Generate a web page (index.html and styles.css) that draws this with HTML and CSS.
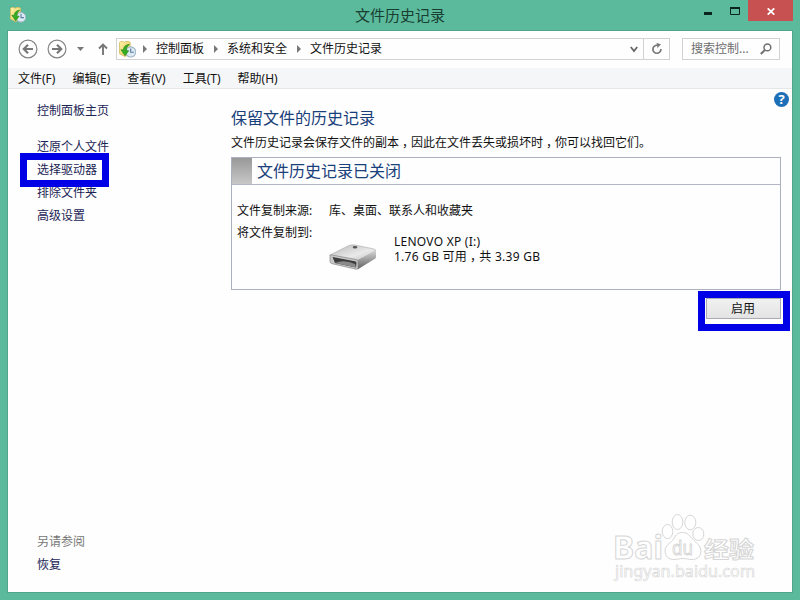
FILE: index.html
```
<!DOCTYPE html>
<html lang="zh-CN">

<head>
    <meta charset="UTF-8">
    <title>文件历史记录</title>
    <link rel="stylesheet" href="styles.css">
</head>

<body>
    <!-- shared file history icon -->
    <svg class="defs" width="0" height="0">
        <defs>
            <linearGradient id="folder" x1="0" y1="0" x2="1" y2="1">
                <stop offset="0" stop-color="#fff3a8"/>
                <stop offset="1" stop-color="#e3c452"/>
            </linearGradient>
            <symbol id="history" viewBox="0 0 16 16">
                <path d="M.5 1.500V12l5 2.500 5-2V1.500L9.500.5H6L5 1.500 4 .5H1.500z" fill="url(#folder)" stroke="#d3bd62" stroke-width=".8"/>
                <circle cx="11" cy="10.300" r="4.800" fill="#dceaf5" stroke="#9eb3c3"/>
                <path d="M11 7v3.600h3" fill="none" stroke="#5d7f9c" stroke-width="1.100"/>
                <path d="M9.800 3.200C6 3.500 4.300 5.500 4.200 8.500L1.800 8.200l3.900 5.600 3.500-4.600-2.300-.2C6.800 6.500 7.600 5 9.800 3.200z" fill="#35ae25" stroke="#228817" stroke-width=".6"/>
            </symbol>
        </defs>
    </svg>

    <div class="titlebar">
        <svg class="app-icon" width="16" height="16"><use href="#history"/></svg>
        <h1>文件历史记录</h1>
        <div class="controls">
            <svg class="min" width="8" height="3"><path d="M0 0h8v3H0z" fill="#0b251c"/></svg>
            <svg class="max" width="10" height="8"><path d="M.5 1h9v6.500h-9z" fill="none" stroke="#0b251c"/><path d="M0 0h10v2H0z" fill="#0b251c"/></svg>
            <div class="close">
                <svg width="8" height="7"><path d="M.7.300l6.600 6.400M7.300.300L.7 6.700" stroke="#fff" stroke-width="1.700"/></svg>
            </div>
        </div>
    </div>

    <div class="window">
        <div class="navbar">
            <svg class="round" width="20" height="20" viewBox="0 0 20 20"><circle cx="10" cy="10" r="8.900" fill="#fff" stroke="#858585" stroke-width="1.200"/><path d="M15 10H6M10 5.800L5.800 10l4.200 4.200" fill="none" stroke="#777" stroke-width="2.200"/></svg>
            <svg class="round" width="20" height="20" viewBox="0 0 20 20"><circle cx="10" cy="10" r="8.900" fill="#fff" stroke="#858585" stroke-width="1.200"/><path d="M5 10h9M10 5.800l4.200 4.200-4.200 4.200" fill="none" stroke="#777" stroke-width="2.200"/></svg>
            <svg class="recent" width="7" height="4"><path d="M0 0h7L3.500 4z" fill="#777"/></svg>
            <svg class="up" width="10" height="12"><path d="M5 12V2M1 5.500l4-4 4 4" fill="none" stroke="#777" stroke-width="1.900"/></svg>
            <div class="address">
                <svg class="path-icon" width="17" height="17"><use href="#history"/></svg>
                <svg class="arrow" width="4" height="8"><path d="M0 0l4 4-4 4z" fill="#777"/></svg>
                <span>控制面板</span>
                <svg class="arrow" width="4" height="8"><path d="M0 0l4 4-4 4z" fill="#777"/></svg>
                <span>系统和安全</span>
                <svg class="arrow" width="4" height="8"><path d="M0 0l4 4-4 4z" fill="#777"/></svg>
                <span>文件历史记录</span>
                <svg class="drop" width="8" height="7"><path d="M.8 1L4 5l3.200-4" fill="none" stroke="#666" stroke-width="1.800"/></svg>
                <div class="refresh">
                    <svg width="12" height="12" viewBox="0 0 12 12"><path d="M6.500 2.300A4 4 0 1 0 9.900 6" fill="none" stroke="#777" stroke-width="1.700"/><path d="M5.500 0l4.500 1.200L6.500 5z" fill="#777"/></svg>
                </div>
            </div>
            <div class="search">
                <span>搜索控制...</span>
                <svg width="12" height="12" viewBox="0 0 12 12"><circle cx="7.400" cy="4.400" r="3.400" fill="none" stroke="#707070" stroke-width="1.500"/><path d="M5 6.800L.8 11" stroke="#707070" stroke-width="2"/></svg>
            </div>
        </div>

        <div class="menubar">
            <span>文件(F)</span>
            <span>编辑(E)</span>
            <span>查看(V)</span>
            <span>工具(T)</span>
            <span>帮助(H)</span>
        </div>

        <div class="content">
            <div class="sidebar">
                <a class="home">控制面板主页</a>
                <a>还原个人文件</a>
                <a class="marked">选择驱动器</a>
                <a>排除文件夹</a>
                <a>高级设置</a>
                <div class="see-also">
                    <p>另请参阅</p>
                    <a>恢复</a>
                </div>
            </div>

            <div class="main">
                <h2>保留文件的历史记录</h2>
                <p class="desc">文件历史记录会保存文件的副本<span class="comma">，</span>因此在文件丢失或损坏时<span class="comma">，</span>你可以找回它们。</p>
                <div class="panel">
                    <div class="panel-head">
                        <div class="status"></div>
                        <h2>文件历史记录已关闭</h2>
                    </div>
                    <div class="panel-body">
                        <div>文件复制来源:</div>
                        <div>库、桌面、联系人和收藏夹</div>
                        <div>将文件复制到:</div>
                        <div class="drive">
                            <svg width="48" height="27" viewBox="0 0 48 27">
                                <defs>
                                    <linearGradient id="top" x1="0" y1="0" x2="1" y2="1">
                                        <stop offset="0" stop-color="#b8b8b8"/>
                                        <stop offset=".6" stop-color="#e9e9e9"/>
                                        <stop offset="1" stop-color="#bcbcbc"/>
                                    </linearGradient>
                                    <linearGradient id="side" x1="0" y1="0" x2="0" y2="1">
                                        <stop offset="0" stop-color="#d5d5d5"/>
                                        <stop offset="1" stop-color="#606060"/>
                                    </linearGradient>
                                </defs>
                                <path d="M1 11L20 1.500q3-1 6-.5l19 4q2 .5 1.500 2L30 16.500 1 12z" fill="url(#top)" stroke="#aaa" stroke-width=".6"/>
                                <path d="M28.500 16L47 6.500v6.500q0 1-1 1.800L28.500 25.500z" fill="url(#side)"/>
                                <path d="M2 10.800l25 4.700q2 .4 2 2v6q0 2-2 1.700L2.500 19.500Q1 19 1 17.500v-5.500q0-1.400 1-1.200z" fill="#c8c8c8" stroke="#858585" stroke-width=".7"/>
                                <path d="M3.500 13l22.500 4.200q1.500.3 1.500 1.800l-.5 4.500L6 19z" fill="#3d3d3d"/>
                                <path d="M6 19q9-4 20 1l1 3.500z" fill="#8a8a8a"/>
                                <ellipse cx="26" cy="3.300" rx="2.300" ry="1.300" fill="#555"/>
                            </svg>
                            <div class="drive-info">
                                <div>LENOVO XP (I:)</div>
                                <div>1.76 GB 可用<span class="comma">，</span>共 3.39 GB</div>
                            </div>
                        </div>
                    </div>
                </div>
                <div class="actions">
                    <button>启用</button>
                </div>
            </div>
        </div>

        <div class="help">?</div>

        <svg class="watermark" width="150" height="75" viewBox="0 0 150 75">
            <g class="mark">
                <text class="bai" x="0" y="49.500" textLength="50" lengthAdjust="spacingAndGlyphs">Bai</text>
                <ellipse cx="54.500" cy="22.500" rx="5.300" ry="7"/>
                <ellipse cx="64.500" cy="13" rx="5.300" ry="7.500"/>
                <ellipse cx="77.300" cy="13.500" rx="5.500" ry="7.300"/>
                <ellipse cx="85.300" cy="25" rx="5.500" ry="6.500"/>
                <path d="M69.500 23.500c-6 0-7 4-10 8-3 3-7 5-7.500 10 0 6 4 9 9 9 4 0 5-1 9-1s5 1 9 1c5 0 9-3 9-9-.5-5-4-7-7-10-4-4-6-8-11.500-8z"/>
                <text class="du" x="59" y="45.500" textLength="21" lengthAdjust="spacingAndGlyphs">du</text>
                <text class="jingyan" x="91" y="48" textLength="50" lengthAdjust="spacingAndGlyphs">经验</text>
                <text class="url" x="2" y="68" textLength="140" lengthAdjust="spacingAndGlyphs">jingyan.baidu.com</text>
            </g>
        </svg>
    </div>
</body>

</html>
```
FILE: styles.css
```
*,
*::after {
    box-sizing: border-box;
}

body {
    margin: 0;
    width: 800px;
    height: 600px;
    overflow: hidden;
    display: flex;
    flex-direction: column;
    background: #5cba9c;
    font-family: "Noto Sans", "Noto Sans CJK SC", sans-serif;
    font-size: 12px;
    line-height: 16px;
    color: #111;
}

h1,
h2,
p {
    margin: 0;
    font-weight: normal;
}

svg {
    display: block;
    flex: none;
}

.defs {
    position: absolute;
}

.titlebar {
    height: 31px;
    flex: none;
    display: grid;
    grid-template-columns: 120px 1fr 120px;
    align-items: start;
}

.app-icon {
    margin: 7px 0 0 10px;
}

.titlebar h1 {
    font-size: 15px;
    line-height: 30px;
    text-align: center;
    color: #173e31;
}

.controls {
    display: flex;
    align-items: flex-start;
    justify-content: flex-end;
    padding-right: 7px;
}

.min {
    margin: 12px 18px 0 0;
}

.max {
    margin: 7px 8px 0 0;
}

.close {
    width: 45px;
    height: 21px;
    display: flex;
    align-items: center;
    justify-content: center;
    padding-top: 2px;
    background: #c75050;
}

.window {
    position: relative;
    flex: 1;
    margin: 0 8px 8px;
    display: flex;
    flex-direction: column;
    background: #fefefe;
    box-shadow: 0 0 0 1px #4fa78b;
}

.navbar {
    height: 37px;
    padding: 7px 12px 0 10px;
    display: flex;
}

.round {
    margin: 1px 9px 0 0;
}

.recent {
    margin: 9px 0 0 1px;
}

.up {
    margin: 5px 8px 0 14px;
}

.address {
    width: 554px;
    height: 22px;
    border: 1px solid #d2d2d2;
    display: flex;
    align-items: center;
}

.path-icon {
    margin: 0 2px;
}

.address .arrow {
    margin: 0 9px 0 10px;
}

.address .path-icon + .arrow {
    margin-left: 5px;
}

.drop {
    margin-left: auto;
    margin-right: 5px;
}

.refresh {
    width: 26px;
    height: 20px;
    display: flex;
    align-items: center;
    justify-content: center;
    border-left: 1px solid #d2d2d2;
}

.search {
    width: 98px;
    height: 22px;
    margin-left: 12px;
    padding: 0 7px 0 8px;
    border: 1px solid #d2d2d2;
    display: flex;
    align-items: center;
    justify-content: space-between;
    color: #6d6d6d;
}

.menubar {
    height: 21px;
    padding-left: 10px;
    display: flex;
    gap: 17px;
    line-height: 21px;
    background: #f5f6f7;
    border-bottom: 1px solid #e4e6e8;
}

.content {
    flex: 1;
    display: flex;
}

.sidebar {
    width: 223px;
    padding: 14px 0 19px 29px;
    display: flex;
    flex-direction: column;
    align-items: flex-start;
    gap: 7px;
    color: #1b2455;
}

.home {
    margin-bottom: 13px;
}

.marked {
    position: relative;
}

/* highlight frame around the link */
.marked::after {
    content: "";
    position: absolute;
    left: -17px;
    top: -9px;
    width: 89px;
    height: 34px;
    border: 7px solid #0000e6;
}

.see-also {
    margin-top: auto;
    display: flex;
    flex-direction: column;
    gap: 7px;
}

.see-also p {
    color: #777;
}

.main {
    width: 550px;
    padding-top: 18px;
}

h2 {
    font-size: 16px;
    line-height: 22px;
    color: #19407b;
}

.desc {
    margin-top: 6px;
}

/* half-width comma centred in a full cell */
.comma {
    padding: 0 3px;
    font-feature-settings: "halt";
}

.panel {
    height: 133px;
    margin-top: 6px;
    border: 1px solid #adb0bf;
}

.panel-head {
    height: 27px;
    display: flex;
    align-items: center;
    border-bottom: 1px solid #b3b6c5;
}

.status {
    width: 20px;
    height: 26px;
    margin-right: 5px;
    background: linear-gradient(#989898, #c8c8c8);
}

.panel-body {
    display: grid;
    grid-template-columns: 92px 1fr;
    row-gap: 6px;
    padding: 18px 5px 0;
}

.drive {
    display: flex;
    align-items: flex-start;
    gap: 17px;
}

.drive svg {
    margin-top: 19px;
}

.drive-info {
    padding-top: 9px;
    line-height: 15px;
    letter-spacing: .25px;
}

.actions {
    width: 92px;
    height: 40px;
    margin: 1px -9px 0 auto;
    border: 7px solid #0000e6;
}

button {
    display: block;
    width: 75px;
    height: 21px;
    margin: 0 0 0 1px;
    padding: 0 1px 0 0;
    border: 1px solid #aaabb5;
    background: linear-gradient(#f1f1f1, #e3e3e3);
    font: inherit;
    line-height: 18px;
    color: #111;
}

.help {
    position: absolute;
    right: 3px;
    top: 61px;
    width: 15px;
    height: 15px;
    border-radius: 50%;
    background: #1d6fb8;
    color: #fff;
    font: bold 13px/15px "Open Sans", sans-serif;
    text-align: center;
}

.watermark {
    position: absolute;
    right: 29px;
    bottom: 8px;
}

.mark {
    fill: #fff;
    stroke: #d6d6d6;
    stroke-width: 1;
}

.bai {
    font: bold 32px "Noto Sans", sans-serif;
}

.du {
    font: 20px "Noto Sans", sans-serif;
}

.jingyan {
    font: bold 22px "Noto Sans CJK SC", sans-serif;
}

.url {
    font: 16px "Noto Sans", sans-serif;
    stroke-width: .6;
}
```
